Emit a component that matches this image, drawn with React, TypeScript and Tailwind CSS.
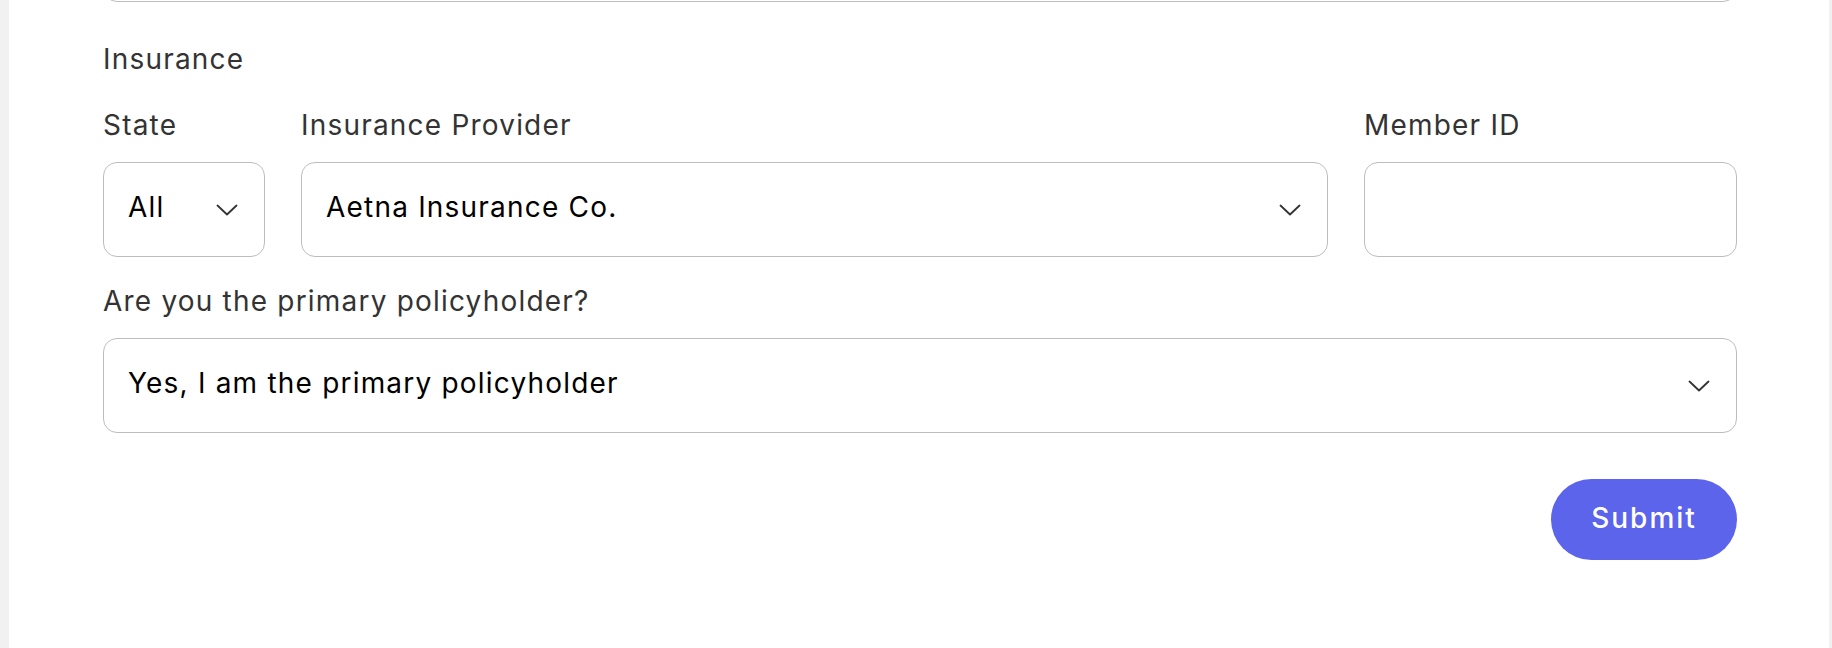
import React from "react";

const Chevron = () => (
  <svg width="22" height="12" viewBox="0 0 22 12" fill="none" className="shrink-0">
    <polyline points="1.5,1.5 11,10.5 20.5,1.5" stroke="#333" strokeWidth="1.8" strokeLinecap="round" strokeLinejoin="round" />
  </svg>
);

const Label = ({ children }: { children: React.ReactNode }) => (
  <div className="text-[28px] leading-[32px] tracking-[1.2px] text-[#333]">{children}</div>
);

const SelectBox = ({ value, className = "" }: { value: string; className?: string }) => (
  <div
    className={`flex h-[95px] items-center justify-between rounded-[14px] border border-[#bdbdbd] bg-white pl-[24px] pr-[26px] text-[28px] tracking-[1.2px] text-black ${className}`}
  >
    <span className="-mt-[5px]">{value}</span>
    <Chevron />
  </div>
);

export default function App() {
  return (
    <div
      className="flex h-[648px] w-full overflow-hidden bg-[#f1f1f1] pl-[9px] pr-[3px]"
      style={{ fontFamily: "Inter, 'Liberation Sans', sans-serif" }}
    >
      <div className="flex flex-1 flex-col bg-white pl-[94px] pr-[92px]">
        {/* previous field, cut off by the top edge */}
        <div className="-mt-[88px] h-[90px] rounded-[14px] border border-[#bdbdbd]" />

        <div className="mt-[41px] text-[28px] leading-[32px] tracking-[1.2px] text-[#333]">Insurance</div>

        <div className="mt-[34px] flex gap-[36px]">
          <div className="flex w-[162px] flex-col gap-[21px]">
            <Label>State</Label>
            <SelectBox value="All" />
          </div>
          <div className="flex flex-1 flex-col gap-[21px]">
            <Label>Insurance Provider</Label>
            <SelectBox value="Aetna Insurance Co." />
          </div>
          <div className="flex w-[373px] flex-col gap-[21px]">
            <Label>Member ID</Label>
            <input
              type="text"
              className="h-[95px] rounded-[14px] border border-[#bdbdbd] bg-white px-[25px] text-[28px] outline-none"
            />
          </div>
        </div>

        <div className="mt-[28px] flex flex-col gap-[21px]">
          <Label>Are you the primary policyholder?</Label>
          <SelectBox value="Yes, I am the primary policyholder" className="h-[92px]" />
        </div>

        <div className="mt-[46px] flex justify-end">
          <button className="h-[81px] w-[186px] rounded-full bg-[#5b64ea] pb-[3px] text-[28px] font-medium tracking-[2px] text-white">
            Submit
          </button>
        </div>
      </div>
    </div>
  );
}
